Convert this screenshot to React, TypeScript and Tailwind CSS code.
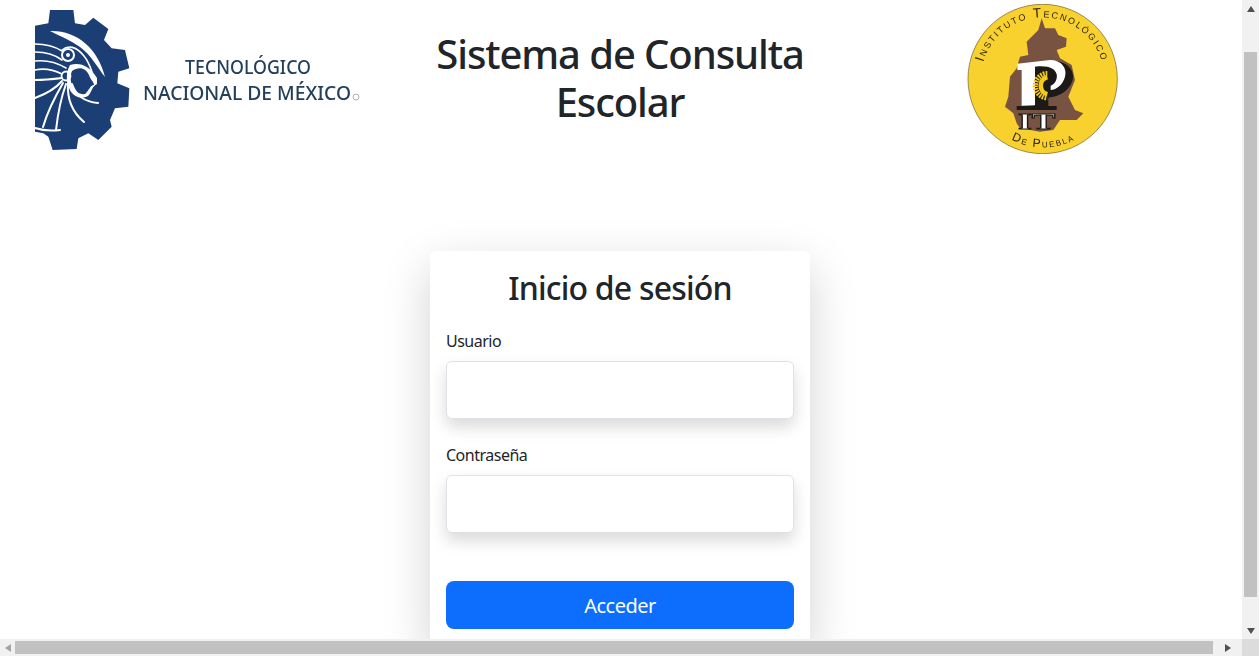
import React from "react";

function TecNMLogo() {
  return (
    <svg viewBox="30 5 335 150" width={335} height={150} className="block blur-[0.4px]">
      <g transform="translate(30 5) scale(0.33333)">
        <path
          d="M15 62 L55 55 L60 15 L130 15 L135 55 L165 60 L190 38 L235 72 L222 105 L245 130 L285 135 L298 190 L265 200 L262 235 L298 250 L295 305 L255 310 L240 345 L245 365 L205 405 L175 385 L145 400 L140 432 L68 435 L55 395 L40 385 L15 380 Z"
          fill="#1b3f74"
        />
      </g>
      <path d="M50 31 C76 30 98 48 105 77 C97 67 92 56 80 47 C70 40 60 36 50 31Z" fill="#fff" />
      <path d="M70 65 C80 62 90 66 97 78 L97 84 C92 86 92 92 88 96 C80 100 72 96 69 88 C66 80 66 72 70 65Z" fill="#fff" />
      <path d="M72 71 C79 66 86 68 89 75 C90 79 94 82 94 85 C90 85 89 91 85 94 C80 95 74 91 72 85 C70 80 70 75 72 71Z" fill="#1b3f74" />
      <g fill="none" stroke="#fff" strokeWidth={1.6} strokeLinecap="round">
        <path d="M35 44 C45 44 54 46 62 51" />
        <path d="M35 52 C44 52 54 54 62 60" />
        <path d="M35 61 C44 60 56 62 66 68" />
        <path d="M35 70 C44 68 54 70 62 74" />
        <path d="M62 50 C68 45 76 46 84 56 C88 61 90 66 92 72" />
        <path d="M35 80 C45 80 54 79 62 78" strokeWidth={2} />
        <path d="M35 98 C46 94 56 88 62 81" strokeWidth={2} />
        <path d="M43 127 C48 110 56 95 63 83" strokeWidth={2} />
        <path d="M56 130 C58 112 61 98 66 84" strokeWidth={2} />
        <path d="M68 83 C67 98 72 112 84 122" strokeWidth={2} />
        <path d="M72 84 C76 96 86 102 98 103" strokeWidth={2} />
        <path d="M35 128 C44 131 52 131 60 130" strokeWidth={2} />
        <circle cx={68} cy={55} r={6} strokeWidth={2} />
        <circle cx={66} cy={76} r={4.5} strokeWidth={1.8} />
      </g>
      <circle cx={68} cy={55} r={2} fill="#fff" />
      <text
        x={185}
        y={74}
        textLength={126}
        lengthAdjust="spacingAndGlyphs"
        fontFamily="'Noto Sans', sans-serif"
        fontWeight={500}
        fontSize={19}
        fill="#223f5c"
      >
        TECNOLÓGICO
      </text>
      <text
        x={143}
        y={100}
        textLength={208}
        lengthAdjust="spacingAndGlyphs"
        fontFamily="'Noto Sans', sans-serif"
        fontWeight={500}
        fontSize={20}
        fill="#223f5c"
      >
        NACIONAL DE MÉXICO
      </text>
      <circle cx={356} cy={97} r={3} fill="none" stroke="#aab2bb" strokeWidth={1} />
    </svg>
  );
}

function ItpLogo() {
  return (
    <svg viewBox="960 0 165 160" width={165} height={160} className="block blur-[0.3px]">
      <g transform="translate(960 0) scale(0.33333)">
        <defs>
          <path id="itp-top" d="M71 183 A185 185 0 0 1 425 183" />
          <path id="itp-bottom" d="M148 415 A204 204 0 0 0 352 415" />
        </defs>
        <circle cx={248} cy={237} r={224} fill="#f9d12e" stroke="#6b5a28" strokeWidth={2} />
        <path
          d="M245 55 L255 85 L285 85 L295 105 L320 115 L318 140 L290 150 L300 175 L335 195 L345 240 L325 290 L345 330 L370 340 L350 360 L300 360 L280 390 L240 395 L180 385 L170 370 L160 340 L135 320 L145 290 L150 230 L170 205 L180 170 L205 165 L200 125 L235 90 Z"
          fill="#785341"
        />
        <text
          fontFamily="'Liberation Sans', sans-serif"
          fontSize={40}
          fill="#2a2412"
          letterSpacing={5.5}
          style={{ fontVariant: "small-caps" }}
        >
          <textPath href="#itp-top" startOffset="50%" textAnchor="middle">
            Instituto Tecnológico
          </textPath>
        </text>
        <text
          fontFamily="'Liberation Sans', sans-serif"
          fontSize={36}
          fill="#2a2412"
          letterSpacing={5}
          style={{ fontVariant: "small-caps" }}
        >
          <textPath href="#itp-bottom" startOffset="50%" textAnchor="middle">
            De Puebla
          </textPath>
        </text>
      </g>
      <g transform="translate(1010 55) scale(0.33333)">
        <path d="M70 28 L130 18 C175 18 195 50 188 75 C180 105 150 125 115 128 L115 158 L75 158 Z" fill="#1c1a17" />
        <path
          d="M22 26 L120 15 C155 15 172 40 165 65 C158 90 140 103 122 105 L122 92 C135 88 143 72 140 58 C135 40 115 30 75 35 L75 150 L35 152 L35 45 L22 45 Z"
          fill="#fff"
        />
        <path d="M112 56 A36 36 0 0 0 112 128" fill="none" stroke="#f4c91c" strokeWidth={16} strokeDasharray="5 3" />
        <path d="M112 66 A27 27 0 0 0 112 118" fill="none" stroke="#f4c91c" strokeWidth={14} />
        <rect x={20} y={153} width={120} height={12} fill="#1c1a17" />
        <text
          x={80}
          y={222}
          textAnchor="middle"
          fontFamily="'Liberation Serif', serif"
          fontWeight={700}
          fontSize={72}
          textLength={112}
          lengthAdjust="spacingAndGlyphs"
          fill="#fff"
          stroke="#1c1a17"
          strokeWidth={3}
        >
          IT
        </text>
      </g>
    </svg>
  );
}

function Arrow({ dir, color }: { dir: "up" | "down" | "left" | "right"; color: string }) {
  const pts = {
    up: "4,0 8,6 0,6",
    down: "0,0 8,0 4,6",
    left: "0,4 6,0 6,8",
    right: "0,0 6,4 0,8",
  }[dir];
  const vertical = dir === "up" || dir === "down";
  return (
    <svg width={vertical ? 8 : 6} height={vertical ? 6 : 8} viewBox={vertical ? "0 0 8 6" : "0 0 6 8"}>
      <polygon points={pts} fill={color} />
    </svg>
  );
}

function Field({ label }: { label: string }) {
  return (
    <div className="mb-[24px]">
      <label className="mb-[8px] block text-[16px] leading-[24px] tracking-[-0.5px] text-[#212529]">{label}</label>
      <input
        type="text"
        className="block h-[58px] w-full rounded-[6px] border border-[#dee2e6] bg-white shadow-[0_8px_16px_rgba(0,0,0,0.15)] outline-none"
      />
    </div>
  );
}

export default function App() {
  return (
    <div className="flex h-screen w-full flex-col overflow-hidden bg-white font-['Noto_Sans','Open_Sans',sans-serif]">
      <div className="flex min-h-0 flex-1">
        <main className="min-w-0 flex-1 overflow-hidden">
          <header className="grid h-[251px] grid-cols-[414px_412px_1fr] items-start">
            <div className="pt-[5px] pl-[30px]">
              <TecNMLogo />
            </div>
            <h1 className="pt-[30px] text-center text-[40px] leading-[48px] font-medium tracking-[-1.1px] text-[#212529]">
              Sistema de Consulta Escolar
            </h1>
            <div className="pl-[134px]">
              <ItpLogo />
            </div>
          </header>
          <section className="ml-[430px] w-[380px] rounded-[6px] bg-white p-[16px] shadow-[0_16px_48px_rgba(0,0,0,0.175)]">
            <h2 className="mb-[20px] text-center text-[32px] leading-[42px] font-medium tracking-[-0.8px] text-[#212529]">
              Inicio de sesión
            </h2>
            <Field label="Usuario" />
            <Field label="Contraseña" />
            <button
              type="button"
              className="mt-[48px] block h-[48px] w-full rounded-[8px] bg-[#0d6efd] pt-[2px] text-[20px] tracking-[-0.5px] text-white"
            >
              Acceder
            </button>
          </section>
        </main>
        <div className="flex w-[17px] shrink-0 flex-col bg-[#f1f1f1]">
          <div className="flex h-[17px] items-center justify-center">
            <Arrow dir="up" color="#505050" />
          </div>
          <div className="mx-[2px] mt-[35px] h-[545px] bg-[#c1c1c1]" />
          <div className="mt-auto flex h-[17px] items-center justify-center">
            <Arrow dir="down" color="#505050" />
          </div>
        </div>
      </div>
      <div className="flex h-[17px] shrink-0 bg-[#f1f1f1]">
        <div className="flex w-[15px] items-center justify-center">
          <Arrow dir="left" color="#a3a3a3" />
        </div>
        <div className="my-[2px] w-[1198px] bg-[#c1c1c1]" />
        <div className="flex flex-1 items-center justify-center">
          <Arrow dir="right" color="#505050" />
        </div>
        <div className="w-[17px] bg-[#dcdcdc]" />
      </div>
    </div>
  );
}
